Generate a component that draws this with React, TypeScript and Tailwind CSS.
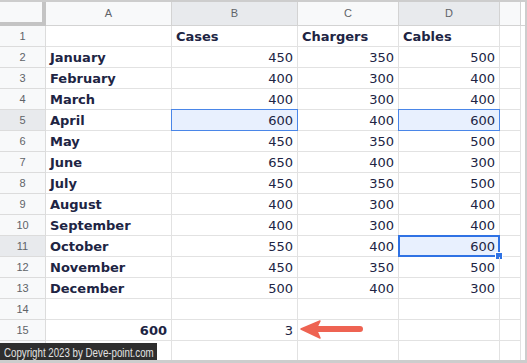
import React from "react";

type Row = { label: string; b: string; c: string; d: string };

const rows: Row[] = [
  { label: "", b: "Cases", c: "Chargers", d: "Cables" },
  { label: "January", b: "450", c: "350", d: "500" },
  { label: "February", b: "400", c: "300", d: "400" },
  { label: "March", b: "400", c: "300", d: "400" },
  { label: "April", b: "600", c: "400", d: "600" },
  { label: "May", b: "450", c: "350", d: "500" },
  { label: "June", b: "650", c: "400", d: "300" },
  { label: "July", b: "450", c: "350", d: "500" },
  { label: "August", b: "400", c: "300", d: "400" },
  { label: "September", b: "400", c: "300", d: "400" },
  { label: "October", b: "550", c: "400", d: "600" },
  { label: "November", b: "450", c: "350", d: "500" },
  { label: "December", b: "500", c: "400", d: "300" },
  { label: "", b: "", c: "", d: "" },
  { label: "600", b: "3", c: "", d: "" },
];

const cellFont = { fontFamily: '"DejaVu Sans", Verdana, sans-serif' };
const uiFont = { fontFamily: '"Liberation Sans", Arial, sans-serif' };

function Cell({
  w,
  children,
  bold,
  right,
  sel,
  active,
}: {
  w: string;
  children?: React.ReactNode;
  bold?: boolean;
  right?: boolean;
  sel?: boolean;
  active?: boolean;
}) {
  return (
    <div
      className={`${w} relative h-full shrink-0 border-r border-b border-[#e2e2e2] flex items-center pt-[2px] px-[4px] text-[13px] text-[#202443] ${
        right ? "justify-end" : "justify-start"
      } ${bold ? "font-bold" : ""} ${sel ? "bg-[#e8f0fe]" : ""}`}
      style={cellFont}
    >
      {sel && !active && (
        <div className="absolute -left-px -top-px right-[-1px] bottom-[-1px] border border-[#4a86e8]" />
      )}
      {active && (
        <>
          <div className="absolute -left-px -top-px right-[-1px] bottom-[-1px] border-2 border-[#2f72e4]" />
          <div className="absolute right-[-4px] bottom-[-4px] w-[6px] h-[6px] bg-[#2f72e4] border border-white box-content" />
        </>
      )}
      <span className="relative whitespace-nowrap">{children}</span>
    </div>
  );
}

export default function App() {
  return (
    <div className="w-[527px] h-[363px] relative overflow-hidden bg-white border-t-2 border-r-2 border-b-[3px] border-[#cdcdcd]">
      {/* header row */}
      <div className="flex h-[24px]" style={uiFont}>
        <div className="w-[46px] h-full shrink-0 bg-[#f8f9fa] border-r-4 border-b-4 border-[#c4c4c4]" />
        {[
          { l: "A", w: "w-[126px]", s: false },
          { l: "B", w: "w-[126px]", s: true },
          { l: "C", w: "w-[101px]", s: false },
          { l: "D", w: "w-[101px]", s: true },
          { l: "", w: "w-[21px]", s: false },
        ].map((h, i) => (
          <div
            key={i}
            className={`${h.w} h-full shrink-0 flex items-center justify-center text-[11px] text-[#5f6368] border-r border-b border-[#d3d3d3] ${
              h.s ? "bg-[#e8eaed]" : "bg-[#f8f9fa]"
            }`}
          >
            {h.l}
          </div>
        ))}
        <div className="flex-1 h-full border-b border-[#d3d3d3]" />
      </div>

      {rows.map((r, i) => {
        const n = i + 1;
        const rowSel = n === 5 || n === 11;
        const header = n === 1;
        const last = n === 15;
        return (
          <div key={i} className="flex h-[21px]">
            <div
              className={`w-[46px] h-full shrink-0 flex items-center justify-center pt-px text-[11px] text-[#5f6368] border-r border-b border-[#dcdcdc] ${
                rowSel ? "bg-[#e8eaed]" : "bg-[#f8f9fa]"
              }`}
              style={uiFont}
            >
              {n}
            </div>
            <Cell w="w-[126px]" bold right={last}>
              {r.label}
            </Cell>
            <Cell w="w-[126px]" bold={header} right={!header} sel={n === 5}>
              {r.b}
            </Cell>
            <Cell w="w-[101px]" bold={header} right={!header}>
              {r.c}
            </Cell>
            <Cell
              w="w-[101px]"
              bold={header}
              right={!header}
              sel={n === 5 || n === 11}
              active={n === 11}
            >
              {r.d}
            </Cell>
            <div className="w-[21px] h-full shrink-0 border-r border-b border-[#e2e2e2]" />
            <div className="flex-1 h-full" />
          </div>
        );
      })}

      {/* row 16 partial */}
      <div className="flex h-[19px]">
        <div className="w-[46px] h-full shrink-0 bg-[#f8f9fa] border-r border-[#dcdcdc]" />
        <div className="w-[126px] h-full shrink-0 border-r border-[#e2e2e2]" />
        <div className="w-[126px] h-full shrink-0 border-r border-[#e2e2e2]" />
        <div className="w-[101px] h-full shrink-0 border-r border-[#e2e2e2]" />
        <div className="w-[101px] h-full shrink-0 border-r border-[#e2e2e2]" />
        <div className="w-[21px] h-full shrink-0 border-r border-[#e2e2e2]" />
      </div>

      {/* arrow */}
      <svg
        className="absolute left-[296px] top-[316px]"
        width="70"
        height="26"
        viewBox="0 0 70 26"
      >
        <path d="M22 11 L64 11" stroke="#ee6352" strokeWidth="6" strokeLinecap="round" />
        <path d="M5 11 L24 3 L20 11 L24 20 Z" fill="#ee6352" stroke="#ee6352" strokeWidth="1.5" strokeLinejoin="round" />
      </svg>

      {/* copyright */}
      <div
        className="absolute left-0 bottom-[-3px] w-[157px] h-[20px] overflow-hidden bg-[#2e2e2e] flex items-center pl-[4px] text-[12px] text-[#e2e2e2] whitespace-nowrap"
        style={uiFont}
      >
        <span className="inline-block origin-left scale-x-[0.81]">Copyright 2023 by Deve-point.com</span>
      </div>
    </div>
  );
}
